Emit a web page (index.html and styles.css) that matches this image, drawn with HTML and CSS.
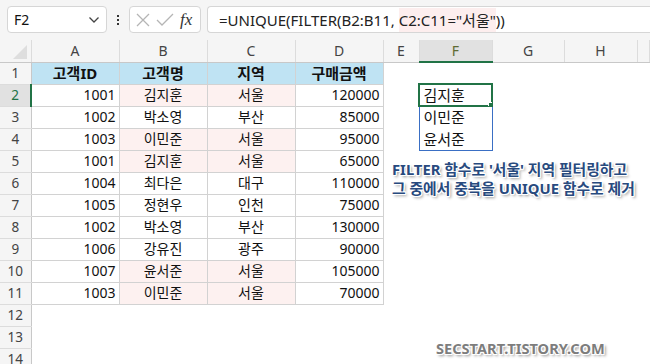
FILE: index.html
```html
<!DOCTYPE html>
<html>
<head>
    <title>UNIQUE FILTER</title>
    <link rel="stylesheet" href="styles.css">
</head>
<body>
    <div class="topbar">
        <div class="namebox">
            <span>F2</span>
            <svg class="chev" width="12" height="8" viewBox="0 0 12 8"><path d="M1.5 1.5 L6 6 L10.5 1.5" fill="none" stroke="#444" stroke-width="1.3"/></svg>
        </div>
        <div class="dots"><i></i><i></i><i></i></div>
        <div class="fxbox">
            <svg width="18" height="18" viewBox="0 0 18 18"><path d="M3 3 L15 15 M15 3 L3 15" stroke="#b5b5b5" stroke-width="1.3"/></svg>
            <svg width="20" height="18" viewBox="0 0 20 18"><path d="M2 9 L7 14 L18 3" fill="none" stroke="#b5b5b5" stroke-width="1.3"/></svg>
            <span class="fx">fx</span>
        </div>
        <div class="formula"><span>=UNIQUE(FILTER(B2:B11, <span class="hl">C2:C11="서울"</span>))</span></div>
    </div>

    <div class="sheet">
        <table class="grid">
            <colgroup>
                <col class="c-rh"><col class="c-a"><col class="c-a"><col class="c-a"><col class="c-a">
                <col class="c-e"><col class="c-f"><col class="c-g"><col class="c-h"><col>
            </colgroup>
            <tr class="colhead">
                <th class="corner"><span class="tri"></span></th>
                <th>A</th><th>B</th><th>C</th><th>D</th><th>E</th><th class="sel">F</th><th>G</th><th>H</th><th></th>
            </tr>
            <tr>
                <th class="rh">1</th>
                <td class="t h">고객ID</td><td class="t h">고객명</td><td class="t h">지역</td><td class="t h">구매금액</td>
                <td></td><td></td><td></td><td></td><td></td>
            </tr>
            <tr>
                <th class="rh rsel">2</th>
                <td class="t n">1001</td><td class="t c pk">김지훈</td><td class="t c pk">서울</td><td class="t n">120000</td>
                <td></td><td class="spill active">김지훈<span class="handle"></span></td><td></td><td></td><td></td>
            </tr>
            <tr>
                <th class="rh">3</th>
                <td class="t n">1002</td><td class="t c">박소영</td><td class="t c">부산</td><td class="t n">85000</td>
                <td></td><td class="spill">이민준</td><td></td><td></td><td></td>
            </tr>
            <tr>
                <th class="rh">4</th>
                <td class="t n">1003</td><td class="t c pk">이민준</td><td class="t c pk">서울</td><td class="t n">95000</td>
                <td></td><td class="spill last">윤서준</td><td></td><td></td><td></td>
            </tr>
            <tr>
                <th class="rh">5</th>
                <td class="t n">1001</td><td class="t c pk">김지훈</td><td class="t c pk">서울</td><td class="t n">65000</td>
                <td></td><td></td><td></td><td></td><td></td>
            </tr>
            <tr>
                <th class="rh">6</th>
                <td class="t n">1004</td><td class="t c">최다은</td><td class="t c">대구</td><td class="t n">110000</td>
                <td></td><td></td><td></td><td></td><td></td>
            </tr>
            <tr>
                <th class="rh">7</th>
                <td class="t n">1005</td><td class="t c">정현우</td><td class="t c">인천</td><td class="t n">75000</td>
                <td></td><td></td><td></td><td></td><td></td>
            </tr>
            <tr>
                <th class="rh">8</th>
                <td class="t n">1002</td><td class="t c">박소영</td><td class="t c">부산</td><td class="t n">130000</td>
                <td></td><td></td><td></td><td></td><td></td>
            </tr>
            <tr>
                <th class="rh">9</th>
                <td class="t n">1006</td><td class="t c">강유진</td><td class="t c">광주</td><td class="t n">90000</td>
                <td></td><td></td><td></td><td></td><td></td>
            </tr>
            <tr>
                <th class="rh">10</th>
                <td class="t n">1007</td><td class="t c pk">윤서준</td><td class="t c pk">서울</td><td class="t n">105000</td>
                <td></td><td></td><td></td><td></td><td></td>
            </tr>
            <tr>
                <th class="rh">11</th>
                <td class="t n">1003</td><td class="t c pk">이민준</td><td class="t c pk">서울</td><td class="t n">70000</td>
                <td></td><td></td><td></td><td></td><td></td>
            </tr>
            <tr>
                <th class="rh">12</th><td></td><td></td><td></td><td></td><td></td><td></td><td></td><td></td><td></td>
            </tr>
            <tr>
                <th class="rh">13</th><td></td><td></td><td></td><td></td><td></td><td></td><td></td><td></td><td></td>
            </tr>
            <tr>
                <th class="rh">14</th><td></td><td></td><td></td><td></td><td></td><td></td><td></td><td></td><td></td>
            </tr>
        </table>

        <div class="note">FILTER 함수로 '서울' 지역 필터링하고<br>그 중에서 중복을 UNIQUE 함수로 제거</div>
        <div class="mark">SECSTART.TISTORY.COM</div>
    </div>
</body>
</html>
```

FILE: styles.css
```css
body {
    margin: 0;
    width: 650px;
    height: 364px;
    overflow: hidden;
    background: #fff;
    font-family: 'Noto Sans', 'Noto Sans CJK KR', sans-serif;
    color: #111;
}

.topbar {
    display: flex;
    align-items: center;
    height: 40px;
    padding-left: 7px;
    background: #f5f5f5;
    box-sizing: border-box;
    white-space: nowrap;
}

.namebox, .fxbox, .formula {
    height: 27px;
    margin-top: -1px;
    box-sizing: border-box;
    background: #fff;
    border: 1px solid #d6d6d6;
    border-radius: 4px;
    display: flex;
    align-items: center;
}

.namebox {
    width: 100px;
    justify-content: space-between;
    padding: 0 6px 0 6px;
    font-size: 14px;
}

.dots {
    width: 22px;
    display: flex;
    flex-direction: column;
    align-items: center;
    gap: 2px;
}

.dots i {
    width: 2px;
    height: 2px;
    background: #333;
}

.fxbox {
    width: 72px;
    padding: 0 4px;
    gap: 3px;
}

.fx {
    font-family: 'Liberation Serif', serif;
    font-style: italic;
    font-size: 17px;
    color: #333;
    margin-left: 2px;
}

.formula {
    margin-left: 6px;
    flex: 1;
    padding-left: 11px;
    font-size: 15px;
    color: #222;
    border-right: none;
    border-radius: 4px 0 0 4px;
    white-space: pre;
}

.formula .hl {
    background: #fdeeee;
    padding: 2px 0;
}

.sheet {
    position: relative;
}

.grid {
    border-collapse: collapse;
    table-layout: fixed;
    width: 650px;
    font-size: 14px;
}

.c-rh { width: 31px; }
.c-a { width: 88px; }
.c-e { width: 36px; }
.c-f { width: 73px; }
.c-g { width: 72px; }
.c-h { width: 73px; }

.grid tr {
    height: 22px;
}

.grid th, .grid td {
    padding: 0;
    line-height: 20px;
    overflow: hidden;
    white-space: nowrap;
}

.colhead th {
    background: #f5f5f5;
    font-weight: normal;
    color: #444;
    font-size: 14px;
    border-right: 1px solid #dcdcdc;
    border-bottom: 1px solid #c8c8c8;
}

.colhead th.sel {
    background: #e1e1e1;
    color: #5f6b33;
    border-bottom: 2px solid #217346;
}

.corner {
    position: relative;
}

.tri {
    position: absolute;
    right: 4px;
    bottom: 3px;
    width: 0;
    height: 0;
    border-left: 14px solid transparent;
    border-bottom: 14px solid #dedede;
}

.rh {
    background: #f5f5f5;
    font-weight: normal;
    color: #444;
    font-size: 13.5px;
    border-right: 1px solid #c8c8c8;
    border-bottom: 1px solid #dcdcdc;
}

.rh.rsel {
    background: #e1e1e1;
    color: #217346;
    border-right: 2px solid #217346;
}

.t {
    border: 1px solid #d2d2d2;
}

.h {
    background: #bfe3f3;
    font-weight: bold;
    text-align: center;
    font-size: 15px;
}

.n {
    text-align: right;
    padding-right: 3px !important;
}

.c {
    text-align: center;
}

.pk {
    background: #fdf1f0;
}

.spill {
    padding-left: 4px !important;
    border-left: 1px solid #3a6fc4;
    border-right: 1px solid #3a6fc4;
    font-size: 15px;
}

.spill.last {
    border-bottom: 1px solid #3a6fc4;
}

.active {
    position: relative;
    outline: 2px solid #217346;
    outline-offset: -1px;
}

.handle {
    position: absolute;
    right: -3px;
    bottom: -3px;
    width: 5px;
    height: 5px;
    background: #217346;
    border: 1px solid #fff;
}

.note {
    position: absolute;
    left: 392px;
    top: 120px;
    font-size: 14.8px;
    font-weight: bold;
    line-height: 19px;
    color: #284a7e;
    text-shadow:
        -1px -1px 0 #fff, 1px -1px 0 #fff, -1px 1px 0 #fff, 1px 1px 0 #fff,
        0 -1px 0 #fff, 0 1px 0 #fff, -1px 0 0 #fff, 1px 0 0 #fff,
        2px 2px 3px rgba(0, 0, 0, 0.45);
    white-space: nowrap;
}

.mark {
    position: absolute;
    left: 436px;
    top: 298px;
    font-size: 14.6px;
    font-weight: bold;
    color: #7d7d7d;
    text-shadow:
        -1px -1px 0 #fff, 1px -1px 0 #fff, -1px 1px 0 #fff, 1px 1px 0 #fff,
        2px 2px 3px rgba(0, 0, 0, 0.45);
}
```
